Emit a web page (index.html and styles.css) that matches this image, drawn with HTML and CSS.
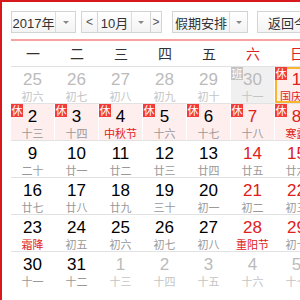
FILE: index.html
```html
<!DOCTYPE html>
<html>
<head>
<meta charset="utf-8">
<link rel="stylesheet" href="styles.css">
</head>
<body>
<div class="cal">
  <div class="toolbar">
    <div class="sel year"><span class="val">2017年</span><span class="arr"></span></div>
    <div class="mgroup">
      <span class="nav prev">&lt;</span>
      <div class="sel month"><span class="val">10月</span><span class="arr"></span></div>
      <span class="nav next">&gt;</span>
    </div>
    <div class="sel holiday"><span class="val">假期安排</span><span class="arr"></span></div>
    <div class="today">返回今天</div>
  </div>
  <div class="weekhead">
    <span>一</span><span>二</span><span>三</span><span>四</span><span>五</span><span class="we">六</span><span class="we">日</span>
  </div>
  <div class="rows">
    <div class="row">
      <div class="cell other"><b>25</b><i>初六</i></div>
      <div class="cell other"><b>26</b><i>初七</i></div>
      <div class="cell other"><b>27</b><i>初八</i></div>
      <div class="cell other"><b>28</b><i>初九</i></div>
      <div class="cell other"><b>29</b><i>初十</i></div>
      <div class="cell other work"><em class="badge ban">班</em><b>30</b><i>十一</i></div>
      <div class="cell rest we sel-day"><em class="badge">休</em><b>1</b><i class="fest">国庆节</i></div>
    </div>
    <div class="row">
      <div class="cell rest"><em class="badge">休</em><b>2</b><i>十三</i></div>
      <div class="cell rest"><em class="badge">休</em><b>3</b><i>十四</i></div>
      <div class="cell rest"><em class="badge">休</em><b>4</b><i class="fest">中秋节</i></div>
      <div class="cell rest"><em class="badge">休</em><b>5</b><i>十六</i></div>
      <div class="cell rest"><em class="badge">休</em><b>6</b><i>十七</i></div>
      <div class="cell rest we"><em class="badge">休</em><b>7</b><i>十八</i></div>
      <div class="cell rest we"><em class="badge">休</em><b>8</b><i class="fest">寒露</i></div>
    </div>
    <div class="row">
      <div class="cell"><b>9</b><i>二十</i></div>
      <div class="cell"><b>10</b><i>廿一</i></div>
      <div class="cell"><b>11</b><i>廿二</i></div>
      <div class="cell"><b>12</b><i>廿三</i></div>
      <div class="cell"><b>13</b><i>廿四</i></div>
      <div class="cell we"><b>14</b><i>廿五</i></div>
      <div class="cell we"><b>15</b><i>廿六</i></div>
    </div>
    <div class="row">
      <div class="cell"><b>16</b><i>廿七</i></div>
      <div class="cell"><b>17</b><i>廿八</i></div>
      <div class="cell"><b>18</b><i>廿九</i></div>
      <div class="cell"><b>19</b><i>三十</i></div>
      <div class="cell"><b>20</b><i>初一</i></div>
      <div class="cell we"><b>21</b><i>初二</i></div>
      <div class="cell we"><b>22</b><i>初三</i></div>
    </div>
    <div class="row">
      <div class="cell"><b>23</b><i class="fest">霜降</i></div>
      <div class="cell"><b>24</b><i>初五</i></div>
      <div class="cell"><b>25</b><i>初六</i></div>
      <div class="cell"><b>26</b><i>初七</i></div>
      <div class="cell"><b>27</b><i>初八</i></div>
      <div class="cell we"><b>28</b><i class="fest">重阳节</i></div>
      <div class="cell we"><b>29</b><i>初十</i></div>
    </div>
    <div class="row last">
      <div class="cell"><b>30</b><i>十一</i></div>
      <div class="cell"><b>31</b><i>十二</i></div>
      <div class="cell other"><b>1</b><i>十三</i></div>
      <div class="cell other"><b>2</b><i>十四</i></div>
      <div class="cell other"><b>3</b><i>十五</i></div>
      <div class="cell other"><b>4</b><i>十六</i></div>
      <div class="cell other"><b>5</b><i>十七</i></div>
    </div>
  </div>
</div>
</body>
</html>
```

FILE: styles.css
```css
html, body {
  margin: 0;
  padding: 0;
  background: #fff;
  overflow: hidden;
}
body {
  font-family: "Liberation Sans", "Noto Sans CJK SC", sans-serif;
}
.cal {
  width: 330px;
  height: 296px;
  border: 2px solid #d7191d;
  padding: 9px 0 0 9px;
  box-sizing: content-box;
}
.toolbar {
  display: flex;
  align-items: stretch;
  height: 22px;
  width: 330px;
  font-family: "Liberation Sans", "Noto Sans CJK SC", sans-serif;
  font-size: 13px;
  color: #333;
}
.sel, .nav, .today {
  box-sizing: border-box;
  border: 1px solid #d4d4d4;
  background: linear-gradient(#ffffff, #f3f3f3);
  display: flex;
  align-items: center;
}
.sel .val {
  height: 100%;
  display: flex;
  align-items: center;
  justify-content: center;
  border-right: 1px solid #dcdcdc;
}
.sel .arr {
  flex: 1;
  height: 100%;
  display: flex;
  align-items: center;
  justify-content: center;
}
.sel .arr::before {
  content: "";
  width: 0;
  height: 0;
  border-left: 3px solid transparent;
  border-right: 3px solid transparent;
  border-top: 3px solid #888;
}
.year { width: 65px; }
.year .val { width: 43px; }
.mgroup {
  display: flex;
  margin-left: 5px;
}
.nav {
  justify-content: center;
  color: #555;
  font-size: 12px;
}
.prev { width: 17px; }
.next { width: 11px; border-left: none; }
.month { width: 53px; border-left: none; }
.month .val { width: 33px; }
.holiday { width: 76px; margin-left: 10px; }
.holiday .val { width: 56px; }
.today {
  margin-left: 9px;
  width: 70px;
  padding-left: 10px;
}
.weekhead {
  margin-top: 6px;
  border-top: 2px solid #f7a3a3;
  border-bottom: 1px solid #e2e2e2;
  display: grid;
  grid-template-columns: repeat(7, 44px);
  height: 25px;
  align-items: center;
  width: 330px;
  font-family: "Noto Sans CJK SC", sans-serif;
  font-size: 14px;
  color: #333;
}
.weekhead span {
  text-align: center;
  line-height: 25px;
}
.weekhead .we { color: #e02020; }
.row {
  display: grid;
  grid-template-columns: repeat(7, 44px);
  border-bottom: 1px solid #e2e2e2;
  width: 330px;
}
.row.last { border-bottom: none; }
.cell {
  position: relative;
  height: 36px;
  margin-right: 1px;
  display: flex;
  flex-direction: column;
  align-items: center;
  box-sizing: border-box;
}
.cell b {
  font-family: "Liberation Sans", sans-serif;
  font-weight: normal;
  font-size: 17px;
  line-height: 18px;
  margin-top: 4px;
  color: #000;
}
.cell i {
  font-style: normal;
  font-family: "Noto Sans CJK SC", sans-serif;
  font-size: 11px;
  line-height: 13px;
  margin-top: 1px;
  color: #999;
}
.cell.we b { color: #e02020; }
.cell i.fest { color: #e02020; }
.cell.other b { color: #bbb; }
.cell.other i { color: #c4c4c4; }
.cell.rest { background: #ffeeee; }
.cell.work { background: #f0f0f0; }
.cell.sel-day {
  outline: 2px solid #f8b62c;
  outline-offset: -2px;
}
.badge {
  position: absolute;
  top: 0;
  left: 0;
  width: 12px;
  height: 13px;
  background: #f43b3b;
  color: #fff;
  font-style: normal;
  font-family: "Noto Sans CJK SC", sans-serif;
  font-size: 11px;
  line-height: 13px;
  text-align: center;
  z-index: 1;
}
.badge.ban { background: #c4c4c4; }
```
